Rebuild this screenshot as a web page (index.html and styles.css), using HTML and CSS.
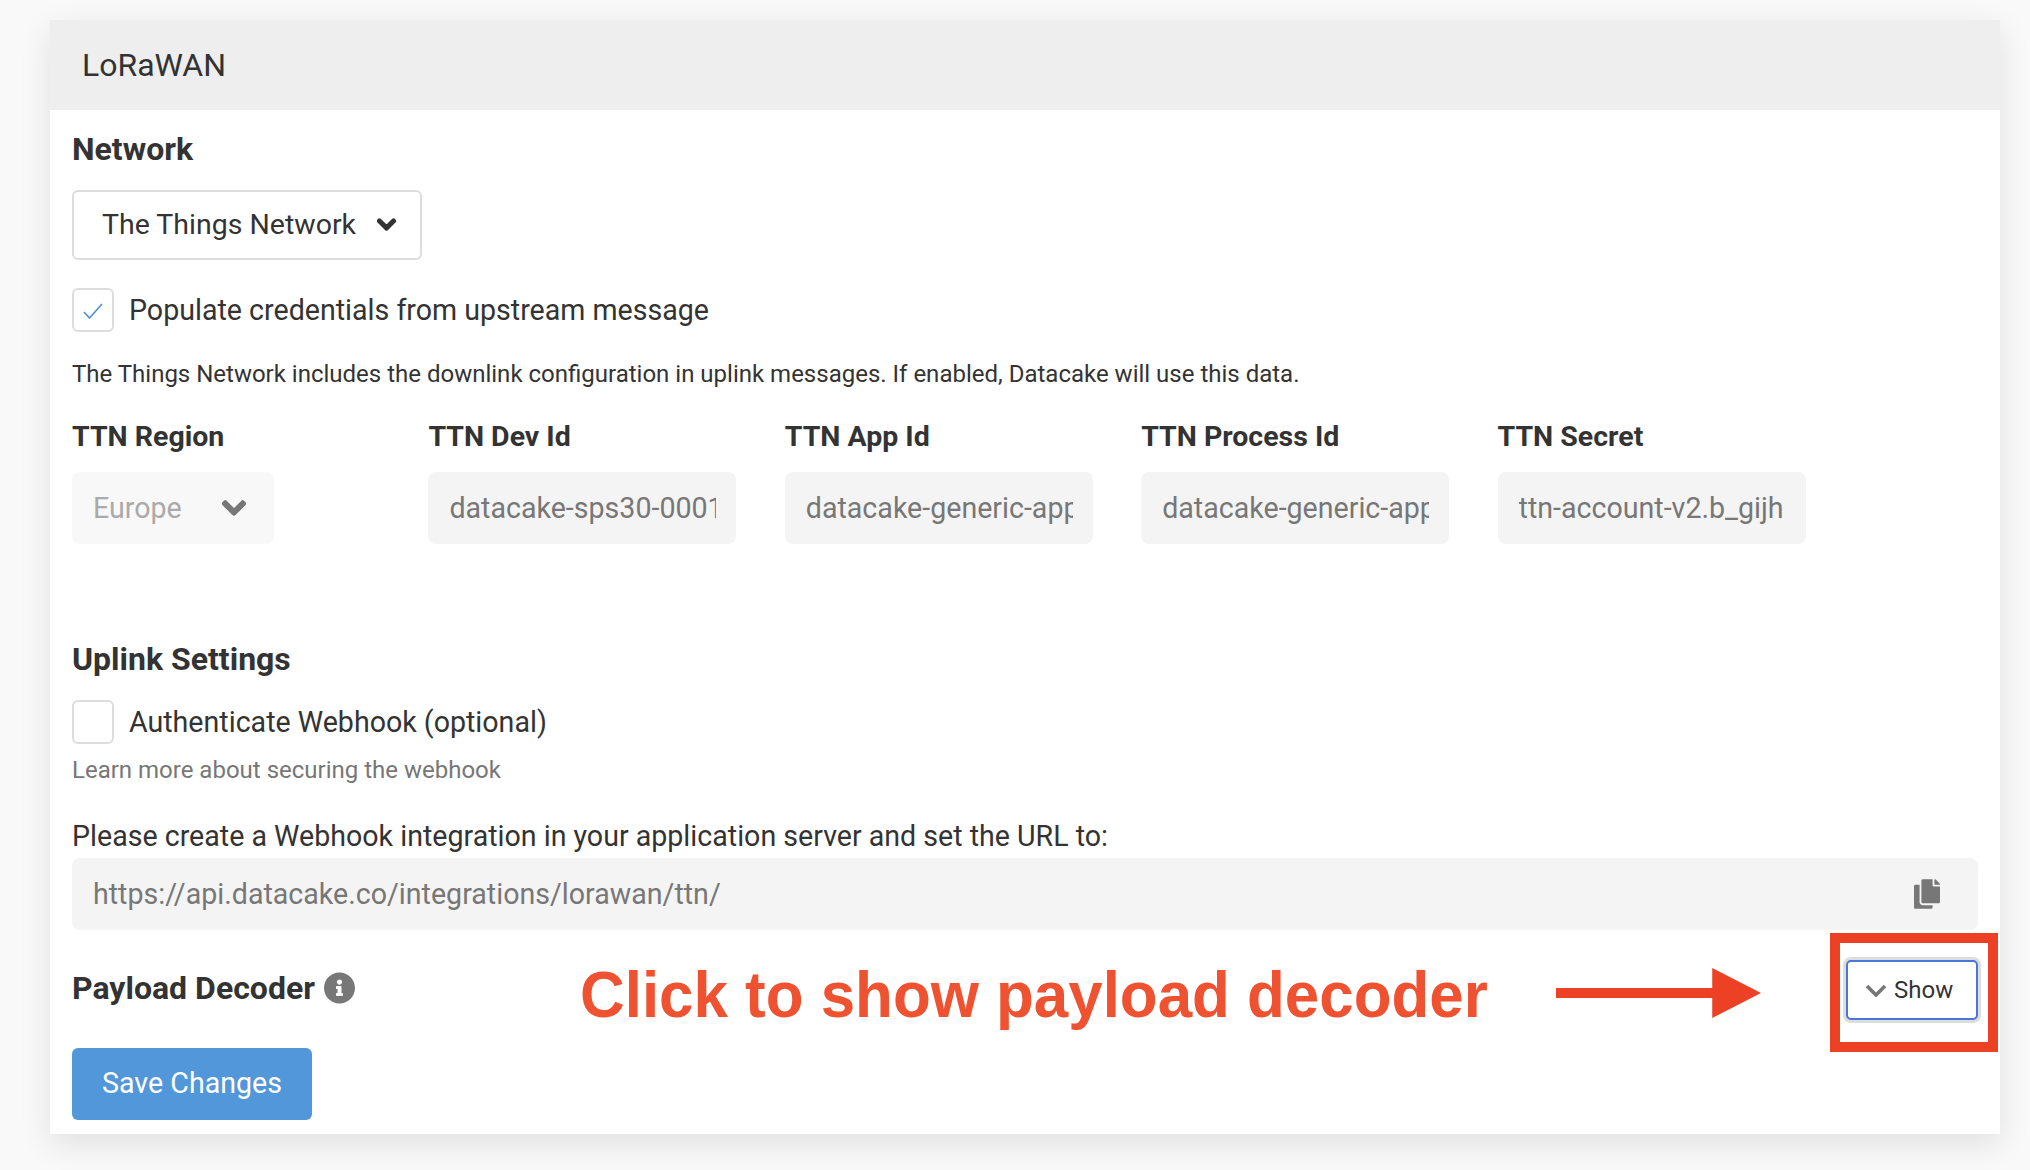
FILE: index.html
```html
<!DOCTYPE html>
<html lang="en">
<head>
  <meta charset="UTF-8">
  <meta name="viewport" content="width=device-width, initial-scale=1.0">
  <title>LoRaWAN</title>
  <link rel="stylesheet" href="styles.css">
</head>
<body>
  <div class="card">
    <div class="card-header">LoRaWAN</div>
    <div class="card-body">
      <!-- Network -->
      <h3 class="section-title">Network</h3>
      <div class="select">
        <span>The Things Network</span>
        <svg class="chevron" viewBox="0 0 448 512"><path d="M207.029 381.476L12.686 187.132c-9.373-9.373-9.373-24.569 0-33.941l22.667-22.667c9.357-9.357 24.522-9.375 33.901-.04L224 284.505l154.745-154.021c9.379-9.335 24.544-9.317 33.901.04l22.667 22.667c9.373 9.373 9.373 24.569 0 33.941L240.971 381.476c-9.373 9.372-24.569 9.372-33.942 0z"/></svg>
      </div>
      <label class="check-row check-row-first">
        <span class="checkbox">
          <svg viewBox="0 0 20 16"><path d="M1 9l5.5 6L19 1" fill="none" stroke="#4a90d9" stroke-width="1.6"/></svg>
        </span>
        Populate credentials from upstream message
      </label>
      <p class="help">The Things Network includes the downlink configuration in uplink messages. If enabled, Datacake will use this data.</p>

      <div class="fields">
        <div>
          <div class="field-label">TTN Region</div>
          <div class="region-select">
            <span>Europe</span>
            <svg class="chevron-big" viewBox="0 0 448 512"><path d="M207.029 381.476L12.686 187.132c-9.373-9.373-9.373-24.569 0-33.941l22.667-22.667c9.357-9.357 24.522-9.375 33.901-.04L224 284.505l154.745-154.021c9.379-9.335 24.544-9.317 33.901.04l22.667 22.667c9.373 9.373 9.373 24.569 0 33.941L240.971 381.476c-9.373 9.372-24.569 9.372-33.942 0z"/></svg>
          </div>
        </div>
        <div>
          <div class="field-label">TTN Dev Id</div>
          <div class="readonly"><span class="readonly-text">datacake-sps30-0001</span></div>
        </div>
        <div>
          <div class="field-label">TTN App Id</div>
          <div class="readonly"><span class="readonly-text">datacake-generic-app</span></div>
        </div>
        <div>
          <div class="field-label">TTN Process Id</div>
          <div class="readonly"><span class="readonly-text">datacake-generic-app</span></div>
        </div>
        <div>
          <div class="field-label">TTN Secret</div>
          <div class="readonly"><span class="readonly-text">ttn-account-v2.b_gijh</span></div>
        </div>
      </div>

      <!-- Uplink -->
      <h3 class="section-title section-title-uplink">Uplink Settings</h3>
      <label class="check-row check-row-uplink">
        <span class="checkbox"></span>
        Authenticate Webhook (optional)
      </label>
      <p class="help help-muted">Learn more about securing the webhook</p>
      <p class="url-label">Please create a Webhook integration in your application server and set the URL to:</p>
      <div class="url-box">
        <span>https://api.datacake.co/integrations/lorawan/ttn/</span>
        <svg class="copy-icon" viewBox="0 0 448 512"><path d="M320 448v40c0 13.255-10.745 24-24 24H24c-13.255 0-24-10.745-24-24V120c0-13.255 10.745-24 24-24h72v296c0 30.879 25.121 56 56 56h168zm0-344V0H152c-13.255 0-24 10.745-24 24v368c0 13.255 10.745 24 24 24h272c13.255 0 24-10.745 24-24V128H344c-13.2 0-24-10.8-24-24zm120.971-31.029L375.029 7.029A24 24 0 0 0 358.059 0H352v96h96v-6.059a24 24 0 0 0-7.029-16.97z"/></svg>
      </div>

      <!-- Payload decoder -->
      <div class="decoder-row">
        <div class="decoder-title">
          Payload Decoder
          <svg class="info-icon" viewBox="8 8 496 496"><path d="M256 8C119.043 8 8 119.083 8 256c0 136.997 111.043 248 248 248s248-111.003 248-248C504 119.083 392.957 8 256 8zm0 110c23.196 0 42 18.804 42 42s-18.804 42-42 42-42-18.804-42-42 18.804-42 42-42zm56 254c0 6.627-5.373 12-12 12h-88c-6.627 0-12-5.373-12-12v-24c0-6.627 5.373-12 12-12h12v-64h-12c-6.627 0-12-5.373-12-12v-24c0-6.627 5.373-12 12-12h64c6.627 0 12 5.373 12 12v100h12c6.627 0 12 5.373 12 12v24z"/></svg>
        </div>
        <button class="show-button">
          <svg viewBox="0 0 22 13"><path d="M2 2l9 9 9-9" fill="none" stroke="#777" stroke-width="3.6"/></svg>
          Show
        </button>
      </div>
      <button class="save-button">Save Changes</button>
    </div>

    <!-- Annotation on top of the screenshot -->
    <div class="note-text">Click to show payload decoder</div>
    <svg class="note-arrow" viewBox="0 0 206 50"><path d="M0 20h157V0l49 25-49 25V30H0z"/></svg>
    <div class="note-box"></div>
  </div>
</body>
</html>
```

FILE: styles.css
```css
/* Reset */
* {
  margin: 0;
  padding: 0;
  box-sizing: border-box;
}
html, body {
  height: 100%;
}
body {
  background: #f9f9f9;
  font-family: Roboto, "Liberation Sans", sans-serif;
  color: #333;
  padding: 20px 30px 0 50px;
  overflow: hidden;
}
/* Card */
.card {
  position: relative;
  height: 1114px;
  background: #fff;
  box-shadow: 0 10px 30px rgba(0, 0, 0, 0.1);
}
.card-header {
  height: 90px;
  display: flex;
  align-items: center;
  padding-left: 32px;
  background: #eee;
  font-size: 32px;
}
.card-body {
  padding: 0 22px;
}
.section-title {
  font-size: 32px;
  font-weight: 700;
  line-height: 36px;
  padding-top: 21px;
}
/* Network select */
.select {
  display: flex;
  align-items: center;
  justify-content: space-between;
  width: 350px;
  height: 70px;
  margin-top: 23px;
  padding: 0 24px 2px 28px;
  border: 2px solid #ddd;
  border-radius: 6px;
  font-size: 28.5px;
}
.chevron {
  width: 19px;
  height: 21px;
  fill: #333;
  stroke: #333;
  stroke-width: 40;
}
/* Checkbox rows */
.check-row {
  display: flex;
  align-items: center;
  gap: 15px;
  font-size: 28.6px;
}
.check-row-first {
  margin-top: 28px;
}
.checkbox {
  display: flex;
  align-items: center;
  justify-content: center;
  width: 42px;
  height: 44px;
  border: 2px solid #ddd;
  border-radius: 6px;
}
.checkbox svg {
  width: 20px;
  height: 16px;
  margin-top: 2px;
}
.help {
  margin-top: 26px;
  font-size: 24px;
  line-height: 32px;
}
.help-muted {
  margin-top: 10px;
  color: #777;
}
/* TTN fields */
.fields {
  display: grid;
  grid-template-columns: repeat(5, 308px);
  column-gap: 48.4px;
  margin-top: 30px;
}
.field-label {
  font-size: 28.5px;
  font-weight: 700;
  line-height: 34px;
  margin-bottom: 18px;
}
.region-select {
  display: flex;
  align-items: center;
  justify-content: space-between;
  width: 202px;
  height: 72px;
  padding: 0 28px 0 21px;
  background: #f8f8f8;
  border-radius: 8px;
  font-size: 28.6px;
  color: #aaa;
}
.chevron-big {
  width: 24px;
  height: 26px;
  fill: #777;
  stroke: #777;
  stroke-width: 40;
}
.readonly {
  height: 72px;
  display: flex;
  align-items: center;
  padding: 0 20px 0 21px;
  background: #f4f4f4;
  border-radius: 8px;
  font-size: 28.6px;
  color: #777;
}
.readonly-text {
  display: block;
  overflow: hidden;
  white-space: nowrap;
}
.section-title-uplink {
  padding-top: 0;
  margin-top: 97px;
}
.check-row-uplink {
  margin-top: 23px;
}
.url-label {
  margin-top: 32px;
  font-size: 28.6px;
  line-height: 36px;
}
.url-box {
  display: flex;
  align-items: center;
  justify-content: space-between;
  height: 72px;
  margin-top: 4px;
  padding: 0 38px 0 21px;
  background: #f4f4f4;
  border-radius: 8px;
  font-size: 28.6px;
  color: #777;
}
.copy-icon {
  width: 26px;
  height: 30px;
  fill: #777;
}
/* Payload decoder */
.decoder-row {
  display: flex;
  align-items: center;
  justify-content: space-between;
  margin-top: 30px;
}
.decoder-title {
  display: flex;
  align-items: center;
  gap: 9px;
  margin-top: -4px;
  font-size: 32px;
  font-weight: 700;
}
.info-icon {
  width: 31px;
  height: 32px;
  fill: #777;
}
.show-button {
  display: flex;
  align-items: center;
  gap: 7px;
  width: 132px;
  height: 60px;
  padding-left: 17px;
  background: #fff;
  border: 2px solid #4a76d9;
  border-radius: 5px;
  box-shadow: 0 0 0 3px #ddd;
  font-family: Roboto, sans-serif;
  font-size: 24px;
  color: #333;
}
.show-button svg {
  width: 22px;
  height: 13px;
}
.save-button {
  display: block;
  width: 240px;
  height: 72px;
  margin-top: 28px;
  padding-bottom: 2px;
  background: #5297da;
  border: none;
  border-radius: 6px;
  font-family: Roboto, sans-serif;
  font-size: 28.6px;
  color: #fff;
}
/* Annotation */
.note-text {
  position: absolute;
  left: 530px;
  top: 940px;
  font-family: "Liberation Sans", sans-serif;
  font-size: 65px;
  font-weight: 700;
  line-height: 70px;
  color: #ee5230;
  white-space: nowrap;
  transform: scaleX(0.952);
  transform-origin: left;
}
.note-arrow {
  position: absolute;
  left: 1506px;
  top: 948px;
  width: 205px;
  height: 50px;
  fill: #ec4125;
}
.note-box {
  position: absolute;
  left: 1780px;
  top: 913px;
  width: 168px;
  height: 119px;
  border: 10px solid #ec4125;
}
```
